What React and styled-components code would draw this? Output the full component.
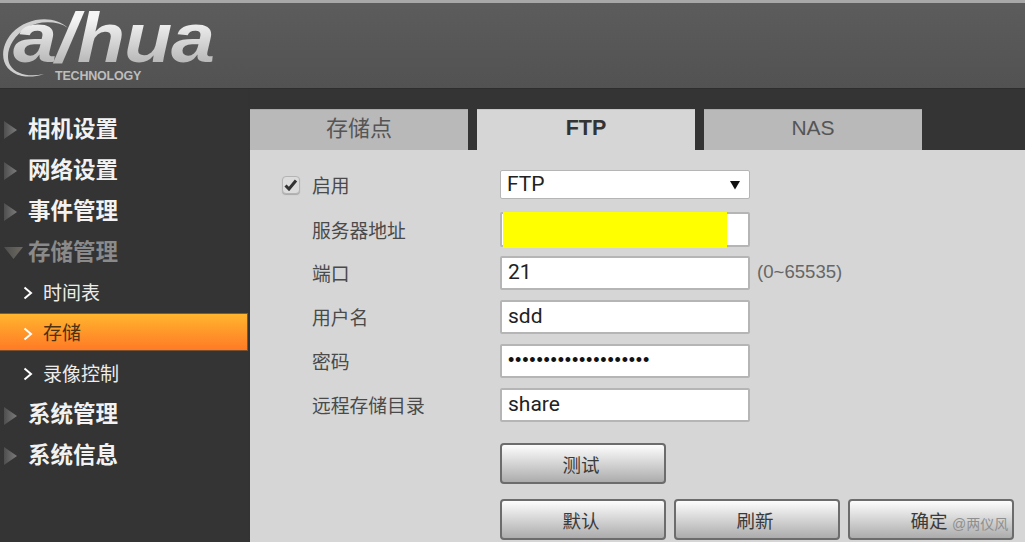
import React from "react";
import styled, { createGlobalStyle } from "styled-components";

const Global = createGlobalStyle`
  html, body { margin: 0; padding: 0; width: 1025px; height: 542px; overflow: hidden; background: #333; }
  * { box-sizing: border-box; }
`;
const CJK = `"Liberation Sans", "Noto Sans CJK SC", sans-serif`;

const Page = styled.div`
  position: relative; width: 1025px; height: 542px; display: flex; flex-direction: column;
  overflow: hidden; font-family: ${CJK}; background: #343434;
`;
const Header = styled.header`
  height: 89px; flex: none; border-top: 3px solid #a8a8a8;
  background: linear-gradient(#5c5c5c, #525252); border-bottom: 1px solid #2e2e2e;
  display: flex; align-items: flex-start;
`;
const Logo = styled.div`
  position: relative; width: 230px; height: 85px;
`;
const LogoMark = styled.span`
  position: absolute; left: 13px; top: -5px; font: italic bold 70px/80px "Liberation Sans", sans-serif;
  letter-spacing: -1px; transform: scaleX(1.13); transform-origin: left top;
  background: linear-gradient(#f6f6f6 25%, #b9b9b9 80%); -webkit-background-clip: text; background-clip: text; color: transparent;
`;
const LogoSwoosh = styled.svg`
  position: absolute; left: 0; top: 10px;
`;
const LogoSub = styled.span`
  position: absolute; left: 55px; top: 66px; font: 700 12.500px/14px "Liberation Sans", sans-serif;
  letter-spacing: -.2px; color: #bdbdbd;
`;
const Body = styled.div`
  flex: 1; display: flex; min-height: 0;
`;
const Sidebar = styled.nav`
  width: 250px; flex: none; padding-top: 21px; border-right: 2px solid #333; display: flex; flex-direction: column;
`;
const MenuItem = styled.div`
  height: 40.8px; display: flex; align-items: center; padding-left: 3px; flex: none;
  font: 700 22.500px/1 ${CJK}; color: ${(p) => (p.$open ? "#8a8a8a" : "#f2f2f2")};
`;
const Tri = styled.svg`
  width: 21px; height: 22px; flex: none; margin-right: 4px;
`;
const SubItem = styled.div`
  height: ${(p) => (p.$active ? 38 : 40)}px; flex: none; width: 248px; display: flex; align-items: center;
  padding-left: 23px; gap: 10px;
  margin-bottom: ${(p) => p.$after || 0}px;
  padding-top: ${(p) => (p.$active ? 3 : 0)}px;
  font: 400 19px/1 ${CJK}; color: ${(p) => (p.$active ? "#4a3212" : "#ececec")};
  ${(p) => p.$active && `
    background: linear-gradient(#ffb52e, #ff7a26);
    border-top: 1px solid #6d6048; border-bottom: 1px solid #77502f; border-right: 1px solid #6d5a44;
  `}
`;
const Chevron = () => (
  <svg width="10" height="14" viewBox="0 0 10 14"><path d="M1.5 1.5 8 7l-6.500 5.500" fill="none" stroke="#fff" strokeWidth="2" /></svg>
);
const Main = styled.main`
  flex: 1; display: flex; flex-direction: column; padding-top: 20px; min-width: 0;
`;
const Tabs = styled.div`
  display: flex; gap: 9px; height: 41px; flex: none;
`;
const Tab = styled.div`
  width: 218px; display: flex; align-items: center; justify-content: center;
  background: ${(p) => (p.$active ? "#d6d6d6" : "#b9b9b9")};
  border-top: 1px solid ${(p) => (p.$active ? "#c6c6c6" : "#a9a9a9")};
  color: ${(p) => (p.$active ? "#333" : "#555")};
  font-size: ${(p) => (p.$wide ? 22 : p.$active ? 21.5 : 21)}px; font-weight: ${(p) => (p.$active ? 700 : 400)};
  padding-bottom: ${(p) => (p.$wide ? 8 : 4)}px;
`;
const Panel = styled.div`
  flex: 1; background: #d6d6d6; padding: 20px 0 0 32px; min-height: 0;
`;
const Row = styled.div`
  display: flex; align-items: center; height: ${(p) => p.$h}px; margin-bottom: ${(p) => p.$mb}px;
`;
const CheckCell = styled.div`
  width: 30px; flex: none; display: flex;
`;
const CheckBox = styled.div`
  width: 18px; height: 18px; border-radius: 4px; background: #dcdcdc; border: 1px solid #b4b4b4;
  box-shadow: 0 1px 1px #aaa; display: flex; align-items: center; justify-content: center;
`;
const Label = styled.div`
  width: 188px; flex: none; font-size: 18.800px; color: #4a4a4a; margin-left: ${(p) => (p.$indent ? 30 : 0)}px;
  padding-bottom: 1px;
`;
const Field = styled.div`
  width: 250px; height: 100%; flex: none; display: flex; align-items: center; justify-content: space-between;
  background: #fff; border: 2px solid #b5b5b5; border-radius: 2px; padding: 0 6px 2px;
  font: 21px/1 "Roboto", "Liberation Sans", sans-serif; color: #222; position: relative;
`;
const Select = styled(Field)`
  border-width: 1.500px; padding: 0 9px 0 6px;
`;
const Redaction = styled.div`
  position: absolute; left: 1px; top: -2px; width: 224px; height: 36px; background: #ff0;
`;
const Dots = styled.span`
  font: 18px/1 "Liberation Sans", sans-serif; letter-spacing: .8px; color: #111;
`;
const Hint = styled.span`
  margin-left: 7px; font: 18.600px/1 "Liberation Sans", sans-serif; color: #666; padding-bottom: 2px;
`;
const Buttons = styled.div`
  display: flex; gap: 8px; margin-left: 218px; margin-bottom: ${(p) => p.$mb}px;
`;
const Button = styled.div`
  width: 166px; height: 41px; flex: none; border: 2px solid #6c6c6c; border-radius: 4px;
  background: linear-gradient(#fdfdfd, #acacac); display: flex; align-items: center; justify-content: center;
  font-size: 18.500px; color: #3a3a3a; padding-right: 4px;
`;
const Watermark = styled.span`
  position: absolute; left: 952px; top: 516px; font-size: 14px; line-height: 16px; color: #8f8f8f; white-space: nowrap;
`;

const Arrow = ({ open }) => (
  <Tri viewBox="0 0 21 22">
    <defs>
      <linearGradient id={open ? "to" : "tc"} x1="0" x2="1" y1="0" y2="0">
        <stop offset="0" stopColor="#4e4e4e" />
        <stop offset="1" stopColor={open ? "#6d6a60" : "#7c7c7c"} />
      </linearGradient>
    </defs>
    {open
      ? <path d="M1 5h19l-9.500 12z" fill="url(#to)" />
      : <path d="M1 2l13 9L1 20z" fill="url(#tc)" />}
  </Tri>
);

const top = ["相机设置", "网络设置", "事件管理"];

export default function App() {
  return (
    <Page>
      <Global />
      <Header>
        <Logo>
          <LogoSwoosh width="80" height="70" viewBox="0 0 80 70">
            <path d="M68 15C55 2 28 3 12 20-2 36 0 58 22 63c6 1 14 1 22-2-14 3-28 1-34-9C4 40 12 24 26 15c12-7 30-8 42 0z" fill="#cfcfcf" />
          </LogoSwoosh>
          <LogoMark>a/hua</LogoMark>
          <LogoSub>TECHNOLOGY</LogoSub>
        </Logo>
      </Header>
      <Body>
        <Sidebar>
          {top.map((t) => (
            <MenuItem key={t}><Arrow />{t}</MenuItem>
          ))}
          <MenuItem $open><Arrow open />存储管理</MenuItem>
          <SubItem><Chevron />时间表</SubItem>
          <SubItem $active $after={3}><Chevron />存储</SubItem>
          <SubItem $after={1}><Chevron />录像控制</SubItem>
          <MenuItem><Arrow />系统管理</MenuItem>
          <MenuItem><Arrow />系统信息</MenuItem>
        </Sidebar>
        <Main>
          <Tabs>
            <Tab $wide>存储点</Tab>
            <Tab $active>FTP</Tab>
            <Tab>NAS</Tab>
          </Tabs>
          <Panel>
            <Row $h={29} $mb={13}>
              <CheckCell>
                <CheckBox>
                  <svg width="14" height="12" viewBox="0 0 14 12"><path d="M1.500 6.500 5 10l7-8.500" fill="none" stroke="#333" strokeWidth="3" /></svg>
                </CheckBox>
              </CheckCell>
              <Label>启用</Label>
              <Select>FTP
                <svg width="10" height="10" viewBox="0 0 10 10"><path d="M0 1h10L5 9.500z" fill="#111" /></svg>
              </Select>
            </Row>
            <Row $h={35} $mb={9}>
              <Label $indent>服务器地址</Label>
              <Field><Redaction /></Field>
            </Row>
            <Row $h={34} $mb={10}>
              <Label $indent>端口</Label>
              <Field>21</Field>
              <Hint>(0~65535)</Hint>
            </Row>
            <Row $h={34} $mb={10}>
              <Label $indent>用户名</Label>
              <Field>sdd</Field>
            </Row>
            <Row $h={34} $mb={10}>
              <Label $indent>密码</Label>
              <Field><Dots>••••••••••••••••••••</Dots></Field>
            </Row>
            <Row $h={34} $mb={21}>
              <Label $indent>远程存储目录</Label>
              <Field>share</Field>
            </Row>
            <Buttons $mb={15}>
              <Button>测试</Button>
            </Buttons>
            <Buttons $mb={0}>
              <Button>默认</Button>
              <Button>刷新</Button>
              <Button>确定</Button>
            </Buttons>
          </Panel>
        </Main>
      </Body>
      <Watermark>@两仪风</Watermark>
    </Page>
  );
}
